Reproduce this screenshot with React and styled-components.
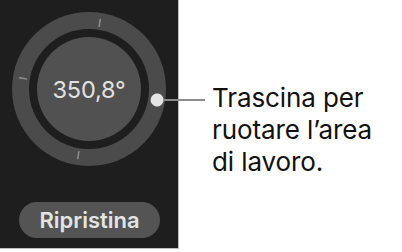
import React from 'react'
import styled, { createGlobalStyle } from 'styled-components'

const GlobalStyle = createGlobalStyle`
    html, body {
        margin: 0;
        padding: 0;
        background: #ffffff;
    }
    body {
        font-family: Inter, "Noto Sans", "Liberation Sans", sans-serif;
    }
`;

const ROTATION = 9.2;
const TICKS = [0, 180, 270];

function Dial({ value }) {
    return (
        <DialStyled>
            <svg width="154" height="154" viewBox="0 0 154 154">
                <circle cx="77" cy="77" r="77" fill="#4b4b4b" />
                <circle cx="77" cy="77" r="60" fill="#1e1e1e" />
                <circle cx="77" cy="77" r="52" fill="#515151" />
                <g transform={`rotate(${ROTATION} 77 77)`}>
                    {TICKS.map((a) => (
                        <line
                            key={a}
                            x1="77" y1="6" x2="77" y2="14"
                            stroke="#8a8a8a"
                            strokeWidth="1.6"
                            transform={`rotate(${a} 77 77)`}
                        />
                    ))}
                    <circle cx="146" cy="77" r="6.5" fill="#e4e4e4" />
                </g>
            </svg>
            <span className="value">{value}</span>
        </DialStyled>
    )
}

function App() {
    return (
        <Page>
            <GlobalStyle />
            <Panel>
                <Dial value="350,8°" />
                <ResetButton>Ripristina</ResetButton>
            </Panel>
            <Leader />
            <Callout>
                Trascina per<br />
                ruotare l’area<br />
                di lavoro.
            </Callout>
        </Page>
    )
}

const Page = styled.div`
    position: relative;
    width: 402px;
    height: 252px;
    display: flex;
    align-items: flex-start;
    overflow: hidden;
`;

const Panel = styled.div`
    background-color: #1e1e1e;
    border-right: 1px solid #bdbdbd;
    border-bottom: 1px solid #bdbdbd;
    display: flex;
    flex-direction: column;
    align-items: flex-start;
    padding: 12px 0 0 12px;
    height: 236px;
    width: 166px;
`;

const DialStyled = styled.div`
    width: 154px;
    height: 154px;
    display: grid;
    place-items: center;
    svg {
        grid-area: 1 / 1;
    }
    .value {
        grid-area: 1 / 1;
        color: #e2e2e2;
        font-size: 23.5px;
        font-weight: 400;
        letter-spacing: -0.2px;
    }
`;

const ResetButton = styled.div`
    margin: 36px 0 0 7px;
    width: 141px;
    height: 36px;
    border-radius: 18px;
    background-color: #545454;
    color: #e4e4e4;
    font-size: 22px;
    font-weight: 600;
    display: flex;
    align-items: center;
    justify-content: center;
`;

const Leader = styled.div`
    position: absolute;
    left: 163px;
    top: 99px;
    width: 42px;
    height: 2px;
    background-color: #8c8c8c;
`;

const Callout = styled.div`
    margin: 82px 0 0 33px;
    color: #111111;
    font-size: 26px;
    line-height: 32px;
    letter-spacing: -0.1px;
    white-space: nowrap;
`;

export default App;
